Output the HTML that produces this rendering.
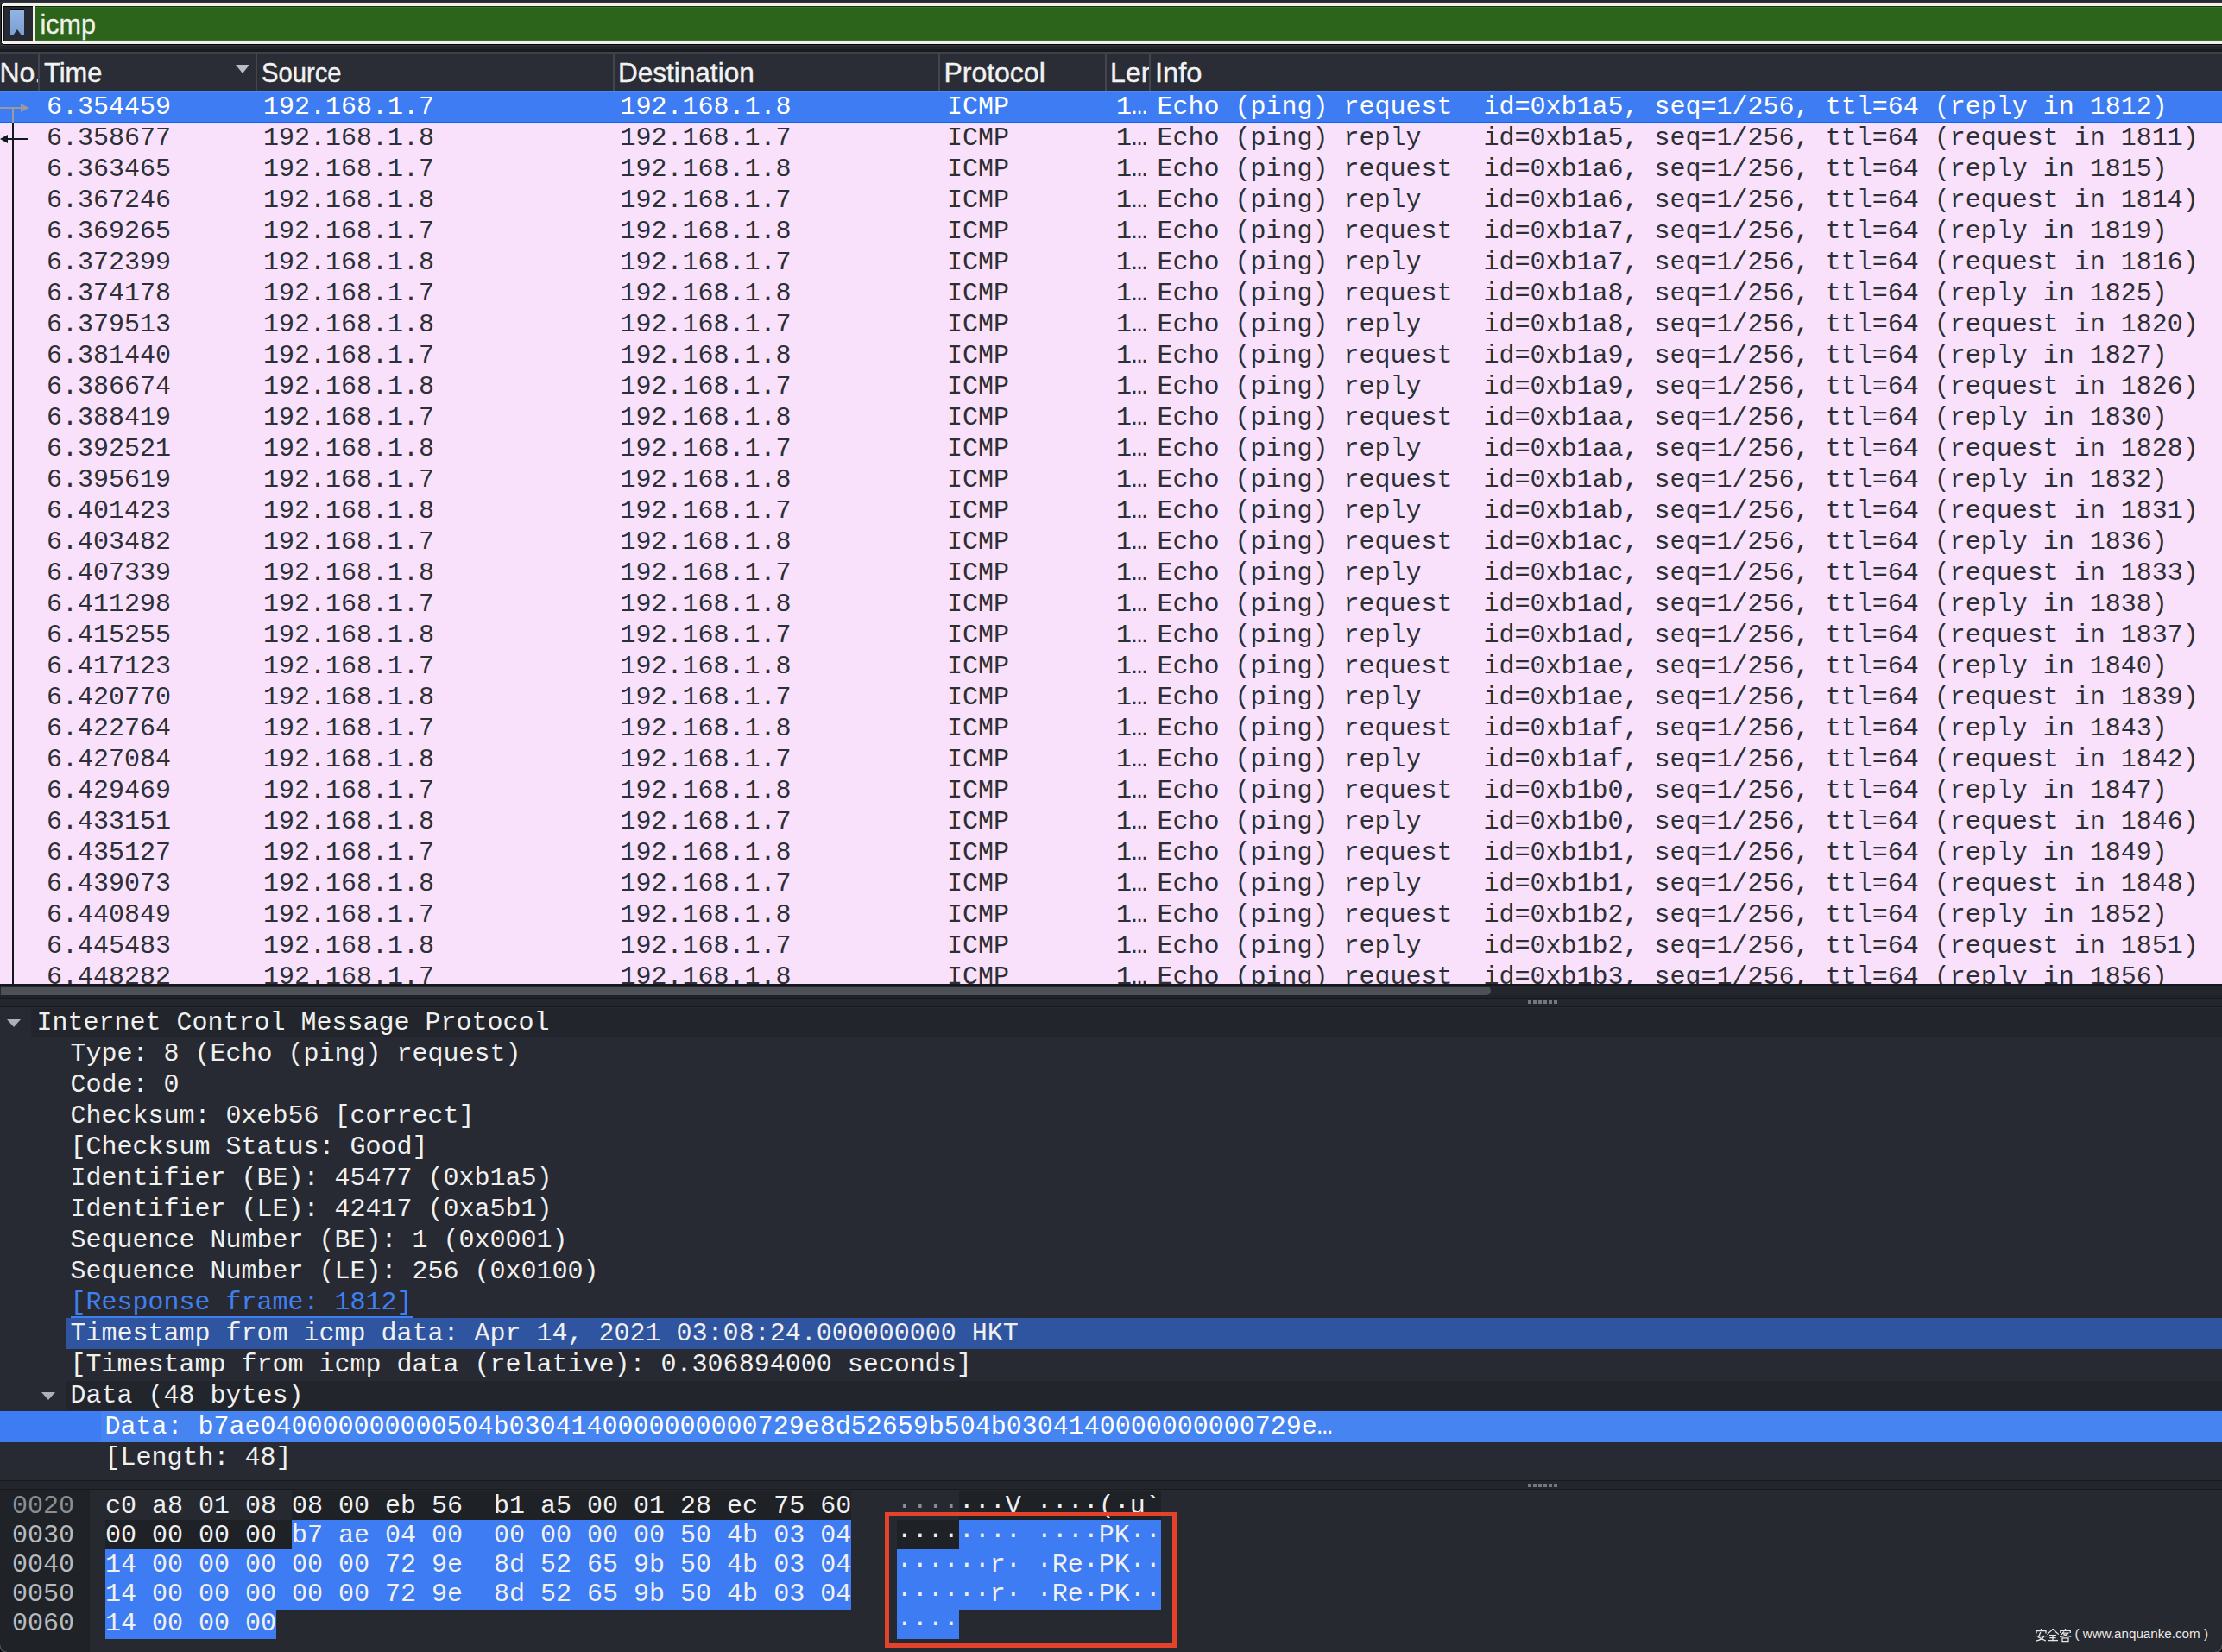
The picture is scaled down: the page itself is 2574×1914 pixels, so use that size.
<!DOCTYPE html>
<html><head><meta charset="utf-8">
<style>
html,body{margin:0;padding:0;}
body{width:2574px;height:1914px;overflow:hidden;position:relative;background:#262932;font-family:"Liberation Mono",monospace;}
.a{position:absolute;}
.m{position:absolute;font-family:"Liberation Mono",monospace;font-size:30px;line-height:36px;white-space:pre;}
.s{position:absolute;font-family:"Liberation Sans",sans-serif;font-size:32px;line-height:36px;white-space:pre;color:#f2f2f2;-webkit-text-stroke:0.4px #f2f2f2;}
</style></head><body>

<div class="a" style="left:0;top:0;width:2574px;height:2px;background:#262932"></div>
<div class="a" style="left:0;top:2px;width:2574px;height:1px;background:#33363d"></div>
<div class="a" style="left:4px;top:3px;width:2570px;height:1px;background:#000"></div>
<div class="a" style="left:4px;top:4px;width:2570px;height:3px;background:#f3f0ea"></div>
<div class="a" style="left:4px;top:48px;width:2570px;height:3px;background:#f3f0ea"></div>
<div class="a" style="left:4px;top:51px;width:2570px;height:1px;background:#000"></div>
<div class="a" style="left:2px;top:5px;width:2px;height:45px;background:#f3f0ea"></div>
<div class="a" style="left:1px;top:6px;width:1px;height:43px;background:#000"></div>
<div class="a" style="left:4px;top:7px;width:34px;height:41px;background:#262932;"></div>
<div class="a" style="left:4px;top:7px;width:34px;height:1px;background:#000"></div>
<div class="a" style="left:4px;top:47px;width:34px;height:1px;background:#000"></div>
<div class="a" style="left:4px;top:8px;width:1px;height:39px;background:#111318"></div>
<div class="a" style="left:38px;top:7px;width:2px;height:41px;background:#f3f0ea"></div>
<svg class="a" style="left:12px;top:11px" width="16" height="31" viewBox="0 0 16 31"><defs><linearGradient id="bg1" x1="0" y1="0" x2="0" y2="1"><stop offset="0" stop-color="#92b4e2"/><stop offset="1" stop-color="#7a9fd2"/></linearGradient></defs><rect x="0" y="0" width="16" height="1" fill="#000"/><path d="M0 1 H16 V30 H13 L8 23 L3 30 H0 Z" fill="url(#bg1)"/></svg>
<div class="a" style="left:40px;top:7px;width:2534px;height:41px;background:#2d641b"></div>
<div class="a" style="left:40px;top:7px;width:2534px;height:1px;background:#004400"></div>
<div class="a" style="left:40px;top:8px;width:2534px;height:1px;background:#3a7030"></div>
<div class="a" style="left:40px;top:46px;width:2534px;height:1px;background:#3a7030"></div>
<div class="a" style="left:40px;top:47px;width:2534px;height:1px;background:#004400"></div>
<div class="a" style="left:40px;top:7px;width:1px;height:41px;background:#004400"></div>
<div class="s" style="left:46.6px;top:10px;line-height:36px;font-size:30.5px;color:#eef2ea;-webkit-text-stroke:0.3px #eef2ea">icmp</div>
<div class="a" style="left:0;top:52px;width:2574px;height:1px;background:#33363d"></div>
<div class="a" style="left:0;top:53px;width:2574px;height:4px;background:#22252b"></div>
<div class="a" style="left:0;top:57px;width:2574px;height:3px;background:#1a1b1f"></div>
<div class="a" style="left:0;top:60px;width:2574px;height:45px;background:#2a2d35"></div>
<div class="a" style="left:0;top:60px;width:2574px;height:2px;background:#3f424a"></div>
<div class="a" style="left:0;top:105px;width:2574px;height:1px;background:#0c0a0a"></div>
<div class="a" style="left:44px;top:62px;width:2px;height:43px;background:#43464d"></div>
<div class="a" style="left:296px;top:62px;width:2px;height:43px;background:#43464d"></div>
<div class="a" style="left:709.5px;top:62px;width:2px;height:43px;background:#43464d"></div>
<div class="a" style="left:1087px;top:62px;width:2px;height:43px;background:#43464d"></div>
<div class="a" style="left:1279.5px;top:62px;width:2px;height:43px;background:#43464d"></div>
<div class="a" style="left:1331px;top:62px;width:2px;height:43px;background:#43464d"></div>
<div class="s" style="left:-0.62px;top:65.5px;width:44.62px;overflow:hidden"><span style="display:inline-block;transform:scaleX(1.0);transform-origin:0 0">No.</span></div>
<div class="s" style="left:51.21px;top:65.5px"><span style="display:inline-block;transform:scaleX(0.963);transform-origin:0 0">Time</span></div>
<div class="s" style="left:303.27px;top:65.5px"><span style="display:inline-block;transform:scaleX(0.913);transform-origin:0 0">Source</span></div>
<div class="s" style="left:716.21px;top:65.5px"><span style="display:inline-block;transform:scaleX(0.985);transform-origin:0 0">Destination</span></div>
<div class="s" style="left:1093.38px;top:65.5px"><span style="display:inline-block;transform:scaleX(1.0);transform-origin:0 0">Protocol</span></div>
<div class="s" style="left:1286.08px;top:65.5px;width:44.92px;overflow:hidden"><span style="display:inline-block;transform:scaleX(1.0);transform-origin:0 0">Len</span></div>
<div class="s" style="left:1337.79px;top:65.5px"><span style="display:inline-block;transform:scaleX(1.02);transform-origin:0 0">Info</span></div>
<svg class="a" style="left:273px;top:75px" width="16" height="11" viewBox="0 0 16 11"><path d="M0 0 H16 L8 10 Z" fill="#b9bcc2"/></svg>
<div class="a" style="left:0;top:106px;width:2574px;height:1034px;overflow:hidden">
<div class="a" style="left:0;top:0px;width:2574px;height:36px;background:#3d7cf3"></div>
<div class="m" style="left:54px;top:0px;color:#ffffff">6.354459</div>
<div class="m" style="left:305px;top:0px;color:#ffffff">192.168.1.7</div>
<div class="m" style="left:718.5px;top:0px;color:#ffffff">192.168.1.8</div>
<div class="m" style="left:1097px;top:0px;color:#ffffff">ICMP</div>
<div class="m" style="left:1293px;top:0px;color:#ffffff">1…</div>
<div class="m" style="left:1340.5px;top:0px;color:#ffffff">Echo (ping) request  id=0xb1a5, seq=1/256, ttl=64 (reply in 1812)</div>
<div class="a" style="left:0;top:36px;width:2574px;height:36px;background:#f9e1fb"></div>
<div class="m" style="left:54px;top:36px;color:#2c3036">6.358677</div>
<div class="m" style="left:305px;top:36px;color:#2c3036">192.168.1.8</div>
<div class="m" style="left:718.5px;top:36px;color:#2c3036">192.168.1.7</div>
<div class="m" style="left:1097px;top:36px;color:#2c3036">ICMP</div>
<div class="m" style="left:1293px;top:36px;color:#2c3036">1…</div>
<div class="m" style="left:1340.5px;top:36px;color:#2c3036">Echo (ping) reply    id=0xb1a5, seq=1/256, ttl=64 (request in 1811)</div>
<div class="a" style="left:0;top:72px;width:2574px;height:36px;background:#f9e1fb"></div>
<div class="m" style="left:54px;top:72px;color:#2c3036">6.363465</div>
<div class="m" style="left:305px;top:72px;color:#2c3036">192.168.1.7</div>
<div class="m" style="left:718.5px;top:72px;color:#2c3036">192.168.1.8</div>
<div class="m" style="left:1097px;top:72px;color:#2c3036">ICMP</div>
<div class="m" style="left:1293px;top:72px;color:#2c3036">1…</div>
<div class="m" style="left:1340.5px;top:72px;color:#2c3036">Echo (ping) request  id=0xb1a6, seq=1/256, ttl=64 (reply in 1815)</div>
<div class="a" style="left:0;top:108px;width:2574px;height:36px;background:#f9e1fb"></div>
<div class="m" style="left:54px;top:108px;color:#2c3036">6.367246</div>
<div class="m" style="left:305px;top:108px;color:#2c3036">192.168.1.8</div>
<div class="m" style="left:718.5px;top:108px;color:#2c3036">192.168.1.7</div>
<div class="m" style="left:1097px;top:108px;color:#2c3036">ICMP</div>
<div class="m" style="left:1293px;top:108px;color:#2c3036">1…</div>
<div class="m" style="left:1340.5px;top:108px;color:#2c3036">Echo (ping) reply    id=0xb1a6, seq=1/256, ttl=64 (request in 1814)</div>
<div class="a" style="left:0;top:144px;width:2574px;height:36px;background:#f9e1fb"></div>
<div class="m" style="left:54px;top:144px;color:#2c3036">6.369265</div>
<div class="m" style="left:305px;top:144px;color:#2c3036">192.168.1.7</div>
<div class="m" style="left:718.5px;top:144px;color:#2c3036">192.168.1.8</div>
<div class="m" style="left:1097px;top:144px;color:#2c3036">ICMP</div>
<div class="m" style="left:1293px;top:144px;color:#2c3036">1…</div>
<div class="m" style="left:1340.5px;top:144px;color:#2c3036">Echo (ping) request  id=0xb1a7, seq=1/256, ttl=64 (reply in 1819)</div>
<div class="a" style="left:0;top:180px;width:2574px;height:36px;background:#f9e1fb"></div>
<div class="m" style="left:54px;top:180px;color:#2c3036">6.372399</div>
<div class="m" style="left:305px;top:180px;color:#2c3036">192.168.1.8</div>
<div class="m" style="left:718.5px;top:180px;color:#2c3036">192.168.1.7</div>
<div class="m" style="left:1097px;top:180px;color:#2c3036">ICMP</div>
<div class="m" style="left:1293px;top:180px;color:#2c3036">1…</div>
<div class="m" style="left:1340.5px;top:180px;color:#2c3036">Echo (ping) reply    id=0xb1a7, seq=1/256, ttl=64 (request in 1816)</div>
<div class="a" style="left:0;top:216px;width:2574px;height:36px;background:#f9e1fb"></div>
<div class="m" style="left:54px;top:216px;color:#2c3036">6.374178</div>
<div class="m" style="left:305px;top:216px;color:#2c3036">192.168.1.7</div>
<div class="m" style="left:718.5px;top:216px;color:#2c3036">192.168.1.8</div>
<div class="m" style="left:1097px;top:216px;color:#2c3036">ICMP</div>
<div class="m" style="left:1293px;top:216px;color:#2c3036">1…</div>
<div class="m" style="left:1340.5px;top:216px;color:#2c3036">Echo (ping) request  id=0xb1a8, seq=1/256, ttl=64 (reply in 1825)</div>
<div class="a" style="left:0;top:252px;width:2574px;height:36px;background:#f9e1fb"></div>
<div class="m" style="left:54px;top:252px;color:#2c3036">6.379513</div>
<div class="m" style="left:305px;top:252px;color:#2c3036">192.168.1.8</div>
<div class="m" style="left:718.5px;top:252px;color:#2c3036">192.168.1.7</div>
<div class="m" style="left:1097px;top:252px;color:#2c3036">ICMP</div>
<div class="m" style="left:1293px;top:252px;color:#2c3036">1…</div>
<div class="m" style="left:1340.5px;top:252px;color:#2c3036">Echo (ping) reply    id=0xb1a8, seq=1/256, ttl=64 (request in 1820)</div>
<div class="a" style="left:0;top:288px;width:2574px;height:36px;background:#f9e1fb"></div>
<div class="m" style="left:54px;top:288px;color:#2c3036">6.381440</div>
<div class="m" style="left:305px;top:288px;color:#2c3036">192.168.1.7</div>
<div class="m" style="left:718.5px;top:288px;color:#2c3036">192.168.1.8</div>
<div class="m" style="left:1097px;top:288px;color:#2c3036">ICMP</div>
<div class="m" style="left:1293px;top:288px;color:#2c3036">1…</div>
<div class="m" style="left:1340.5px;top:288px;color:#2c3036">Echo (ping) request  id=0xb1a9, seq=1/256, ttl=64 (reply in 1827)</div>
<div class="a" style="left:0;top:324px;width:2574px;height:36px;background:#f9e1fb"></div>
<div class="m" style="left:54px;top:324px;color:#2c3036">6.386674</div>
<div class="m" style="left:305px;top:324px;color:#2c3036">192.168.1.8</div>
<div class="m" style="left:718.5px;top:324px;color:#2c3036">192.168.1.7</div>
<div class="m" style="left:1097px;top:324px;color:#2c3036">ICMP</div>
<div class="m" style="left:1293px;top:324px;color:#2c3036">1…</div>
<div class="m" style="left:1340.5px;top:324px;color:#2c3036">Echo (ping) reply    id=0xb1a9, seq=1/256, ttl=64 (request in 1826)</div>
<div class="a" style="left:0;top:360px;width:2574px;height:36px;background:#f9e1fb"></div>
<div class="m" style="left:54px;top:360px;color:#2c3036">6.388419</div>
<div class="m" style="left:305px;top:360px;color:#2c3036">192.168.1.7</div>
<div class="m" style="left:718.5px;top:360px;color:#2c3036">192.168.1.8</div>
<div class="m" style="left:1097px;top:360px;color:#2c3036">ICMP</div>
<div class="m" style="left:1293px;top:360px;color:#2c3036">1…</div>
<div class="m" style="left:1340.5px;top:360px;color:#2c3036">Echo (ping) request  id=0xb1aa, seq=1/256, ttl=64 (reply in 1830)</div>
<div class="a" style="left:0;top:396px;width:2574px;height:36px;background:#f9e1fb"></div>
<div class="m" style="left:54px;top:396px;color:#2c3036">6.392521</div>
<div class="m" style="left:305px;top:396px;color:#2c3036">192.168.1.8</div>
<div class="m" style="left:718.5px;top:396px;color:#2c3036">192.168.1.7</div>
<div class="m" style="left:1097px;top:396px;color:#2c3036">ICMP</div>
<div class="m" style="left:1293px;top:396px;color:#2c3036">1…</div>
<div class="m" style="left:1340.5px;top:396px;color:#2c3036">Echo (ping) reply    id=0xb1aa, seq=1/256, ttl=64 (request in 1828)</div>
<div class="a" style="left:0;top:432px;width:2574px;height:36px;background:#f9e1fb"></div>
<div class="m" style="left:54px;top:432px;color:#2c3036">6.395619</div>
<div class="m" style="left:305px;top:432px;color:#2c3036">192.168.1.7</div>
<div class="m" style="left:718.5px;top:432px;color:#2c3036">192.168.1.8</div>
<div class="m" style="left:1097px;top:432px;color:#2c3036">ICMP</div>
<div class="m" style="left:1293px;top:432px;color:#2c3036">1…</div>
<div class="m" style="left:1340.5px;top:432px;color:#2c3036">Echo (ping) request  id=0xb1ab, seq=1/256, ttl=64 (reply in 1832)</div>
<div class="a" style="left:0;top:468px;width:2574px;height:36px;background:#f9e1fb"></div>
<div class="m" style="left:54px;top:468px;color:#2c3036">6.401423</div>
<div class="m" style="left:305px;top:468px;color:#2c3036">192.168.1.8</div>
<div class="m" style="left:718.5px;top:468px;color:#2c3036">192.168.1.7</div>
<div class="m" style="left:1097px;top:468px;color:#2c3036">ICMP</div>
<div class="m" style="left:1293px;top:468px;color:#2c3036">1…</div>
<div class="m" style="left:1340.5px;top:468px;color:#2c3036">Echo (ping) reply    id=0xb1ab, seq=1/256, ttl=64 (request in 1831)</div>
<div class="a" style="left:0;top:504px;width:2574px;height:36px;background:#f9e1fb"></div>
<div class="m" style="left:54px;top:504px;color:#2c3036">6.403482</div>
<div class="m" style="left:305px;top:504px;color:#2c3036">192.168.1.7</div>
<div class="m" style="left:718.5px;top:504px;color:#2c3036">192.168.1.8</div>
<div class="m" style="left:1097px;top:504px;color:#2c3036">ICMP</div>
<div class="m" style="left:1293px;top:504px;color:#2c3036">1…</div>
<div class="m" style="left:1340.5px;top:504px;color:#2c3036">Echo (ping) request  id=0xb1ac, seq=1/256, ttl=64 (reply in 1836)</div>
<div class="a" style="left:0;top:540px;width:2574px;height:36px;background:#f9e1fb"></div>
<div class="m" style="left:54px;top:540px;color:#2c3036">6.407339</div>
<div class="m" style="left:305px;top:540px;color:#2c3036">192.168.1.8</div>
<div class="m" style="left:718.5px;top:540px;color:#2c3036">192.168.1.7</div>
<div class="m" style="left:1097px;top:540px;color:#2c3036">ICMP</div>
<div class="m" style="left:1293px;top:540px;color:#2c3036">1…</div>
<div class="m" style="left:1340.5px;top:540px;color:#2c3036">Echo (ping) reply    id=0xb1ac, seq=1/256, ttl=64 (request in 1833)</div>
<div class="a" style="left:0;top:576px;width:2574px;height:36px;background:#f9e1fb"></div>
<div class="m" style="left:54px;top:576px;color:#2c3036">6.411298</div>
<div class="m" style="left:305px;top:576px;color:#2c3036">192.168.1.7</div>
<div class="m" style="left:718.5px;top:576px;color:#2c3036">192.168.1.8</div>
<div class="m" style="left:1097px;top:576px;color:#2c3036">ICMP</div>
<div class="m" style="left:1293px;top:576px;color:#2c3036">1…</div>
<div class="m" style="left:1340.5px;top:576px;color:#2c3036">Echo (ping) request  id=0xb1ad, seq=1/256, ttl=64 (reply in 1838)</div>
<div class="a" style="left:0;top:612px;width:2574px;height:36px;background:#f9e1fb"></div>
<div class="m" style="left:54px;top:612px;color:#2c3036">6.415255</div>
<div class="m" style="left:305px;top:612px;color:#2c3036">192.168.1.8</div>
<div class="m" style="left:718.5px;top:612px;color:#2c3036">192.168.1.7</div>
<div class="m" style="left:1097px;top:612px;color:#2c3036">ICMP</div>
<div class="m" style="left:1293px;top:612px;color:#2c3036">1…</div>
<div class="m" style="left:1340.5px;top:612px;color:#2c3036">Echo (ping) reply    id=0xb1ad, seq=1/256, ttl=64 (request in 1837)</div>
<div class="a" style="left:0;top:648px;width:2574px;height:36px;background:#f9e1fb"></div>
<div class="m" style="left:54px;top:648px;color:#2c3036">6.417123</div>
<div class="m" style="left:305px;top:648px;color:#2c3036">192.168.1.7</div>
<div class="m" style="left:718.5px;top:648px;color:#2c3036">192.168.1.8</div>
<div class="m" style="left:1097px;top:648px;color:#2c3036">ICMP</div>
<div class="m" style="left:1293px;top:648px;color:#2c3036">1…</div>
<div class="m" style="left:1340.5px;top:648px;color:#2c3036">Echo (ping) request  id=0xb1ae, seq=1/256, ttl=64 (reply in 1840)</div>
<div class="a" style="left:0;top:684px;width:2574px;height:36px;background:#f9e1fb"></div>
<div class="m" style="left:54px;top:684px;color:#2c3036">6.420770</div>
<div class="m" style="left:305px;top:684px;color:#2c3036">192.168.1.8</div>
<div class="m" style="left:718.5px;top:684px;color:#2c3036">192.168.1.7</div>
<div class="m" style="left:1097px;top:684px;color:#2c3036">ICMP</div>
<div class="m" style="left:1293px;top:684px;color:#2c3036">1…</div>
<div class="m" style="left:1340.5px;top:684px;color:#2c3036">Echo (ping) reply    id=0xb1ae, seq=1/256, ttl=64 (request in 1839)</div>
<div class="a" style="left:0;top:720px;width:2574px;height:36px;background:#f9e1fb"></div>
<div class="m" style="left:54px;top:720px;color:#2c3036">6.422764</div>
<div class="m" style="left:305px;top:720px;color:#2c3036">192.168.1.7</div>
<div class="m" style="left:718.5px;top:720px;color:#2c3036">192.168.1.8</div>
<div class="m" style="left:1097px;top:720px;color:#2c3036">ICMP</div>
<div class="m" style="left:1293px;top:720px;color:#2c3036">1…</div>
<div class="m" style="left:1340.5px;top:720px;color:#2c3036">Echo (ping) request  id=0xb1af, seq=1/256, ttl=64 (reply in 1843)</div>
<div class="a" style="left:0;top:756px;width:2574px;height:36px;background:#f9e1fb"></div>
<div class="m" style="left:54px;top:756px;color:#2c3036">6.427084</div>
<div class="m" style="left:305px;top:756px;color:#2c3036">192.168.1.8</div>
<div class="m" style="left:718.5px;top:756px;color:#2c3036">192.168.1.7</div>
<div class="m" style="left:1097px;top:756px;color:#2c3036">ICMP</div>
<div class="m" style="left:1293px;top:756px;color:#2c3036">1…</div>
<div class="m" style="left:1340.5px;top:756px;color:#2c3036">Echo (ping) reply    id=0xb1af, seq=1/256, ttl=64 (request in 1842)</div>
<div class="a" style="left:0;top:792px;width:2574px;height:36px;background:#f9e1fb"></div>
<div class="m" style="left:54px;top:792px;color:#2c3036">6.429469</div>
<div class="m" style="left:305px;top:792px;color:#2c3036">192.168.1.7</div>
<div class="m" style="left:718.5px;top:792px;color:#2c3036">192.168.1.8</div>
<div class="m" style="left:1097px;top:792px;color:#2c3036">ICMP</div>
<div class="m" style="left:1293px;top:792px;color:#2c3036">1…</div>
<div class="m" style="left:1340.5px;top:792px;color:#2c3036">Echo (ping) request  id=0xb1b0, seq=1/256, ttl=64 (reply in 1847)</div>
<div class="a" style="left:0;top:828px;width:2574px;height:36px;background:#f9e1fb"></div>
<div class="m" style="left:54px;top:828px;color:#2c3036">6.433151</div>
<div class="m" style="left:305px;top:828px;color:#2c3036">192.168.1.8</div>
<div class="m" style="left:718.5px;top:828px;color:#2c3036">192.168.1.7</div>
<div class="m" style="left:1097px;top:828px;color:#2c3036">ICMP</div>
<div class="m" style="left:1293px;top:828px;color:#2c3036">1…</div>
<div class="m" style="left:1340.5px;top:828px;color:#2c3036">Echo (ping) reply    id=0xb1b0, seq=1/256, ttl=64 (request in 1846)</div>
<div class="a" style="left:0;top:864px;width:2574px;height:36px;background:#f9e1fb"></div>
<div class="m" style="left:54px;top:864px;color:#2c3036">6.435127</div>
<div class="m" style="left:305px;top:864px;color:#2c3036">192.168.1.7</div>
<div class="m" style="left:718.5px;top:864px;color:#2c3036">192.168.1.8</div>
<div class="m" style="left:1097px;top:864px;color:#2c3036">ICMP</div>
<div class="m" style="left:1293px;top:864px;color:#2c3036">1…</div>
<div class="m" style="left:1340.5px;top:864px;color:#2c3036">Echo (ping) request  id=0xb1b1, seq=1/256, ttl=64 (reply in 1849)</div>
<div class="a" style="left:0;top:900px;width:2574px;height:36px;background:#f9e1fb"></div>
<div class="m" style="left:54px;top:900px;color:#2c3036">6.439073</div>
<div class="m" style="left:305px;top:900px;color:#2c3036">192.168.1.8</div>
<div class="m" style="left:718.5px;top:900px;color:#2c3036">192.168.1.7</div>
<div class="m" style="left:1097px;top:900px;color:#2c3036">ICMP</div>
<div class="m" style="left:1293px;top:900px;color:#2c3036">1…</div>
<div class="m" style="left:1340.5px;top:900px;color:#2c3036">Echo (ping) reply    id=0xb1b1, seq=1/256, ttl=64 (request in 1848)</div>
<div class="a" style="left:0;top:936px;width:2574px;height:36px;background:#f9e1fb"></div>
<div class="m" style="left:54px;top:936px;color:#2c3036">6.440849</div>
<div class="m" style="left:305px;top:936px;color:#2c3036">192.168.1.7</div>
<div class="m" style="left:718.5px;top:936px;color:#2c3036">192.168.1.8</div>
<div class="m" style="left:1097px;top:936px;color:#2c3036">ICMP</div>
<div class="m" style="left:1293px;top:936px;color:#2c3036">1…</div>
<div class="m" style="left:1340.5px;top:936px;color:#2c3036">Echo (ping) request  id=0xb1b2, seq=1/256, ttl=64 (reply in 1852)</div>
<div class="a" style="left:0;top:972px;width:2574px;height:36px;background:#f9e1fb"></div>
<div class="m" style="left:54px;top:972px;color:#2c3036">6.445483</div>
<div class="m" style="left:305px;top:972px;color:#2c3036">192.168.1.8</div>
<div class="m" style="left:718.5px;top:972px;color:#2c3036">192.168.1.7</div>
<div class="m" style="left:1097px;top:972px;color:#2c3036">ICMP</div>
<div class="m" style="left:1293px;top:972px;color:#2c3036">1…</div>
<div class="m" style="left:1340.5px;top:972px;color:#2c3036">Echo (ping) reply    id=0xb1b2, seq=1/256, ttl=64 (request in 1851)</div>
<div class="a" style="left:0;top:1008px;width:2574px;height:36px;background:#f9e1fb"></div>
<div class="m" style="left:54px;top:1008px;color:#2c3036">6.448282</div>
<div class="m" style="left:305px;top:1008px;color:#2c3036">192.168.1.7</div>
<div class="m" style="left:718.5px;top:1008px;color:#2c3036">192.168.1.8</div>
<div class="m" style="left:1097px;top:1008px;color:#2c3036">ICMP</div>
<div class="m" style="left:1293px;top:1008px;color:#2c3036">1…</div>
<div class="m" style="left:1340.5px;top:1008px;color:#2c3036">Echo (ping) request  id=0xb1b3, seq=1/256, ttl=64 (reply in 1856)</div>
<div class="a" style="left:0;top:0;width:2574px;height:1px;background:#4a8bff"></div>
<div class="a" style="left:0;top:35px;width:2574px;height:1px;background:#0a62f2"></div>
<div class="a" style="left:0;top:18px;width:25px;height:2px;background:#9a9a9a"></div>
<svg class="a" style="left:24px;top:14px" width="10" height="10" viewBox="0 0 10 10"><path d="M0 0 L10 5 L0 10 Z" fill="#9a9a9a"/></svg>
<div class="a" style="left:14px;top:19px;width:2px;height:17px;background:#9a9a9a"></div>
<div class="a" style="left:14px;top:36px;width:2px;height:1000px;background:#0f1a1c"></div>
<div class="a" style="left:7px;top:54px;width:25px;height:2px;background:#0f1a1c"></div>
<svg class="a" style="left:0px;top:50px" width="9" height="10" viewBox="0 0 9 10"><path d="M9 0 L0 5 L9 10 Z" fill="#0f1a1c"/></svg>
</div>
<div class="a" style="left:0;top:1140px;width:2574px;height:2px;background:#15171b"></div>
<div class="a" style="left:0;top:1142px;width:2574px;height:11px;background:#23262c"></div>
<div class="a" style="left:1px;top:1143px;width:1726px;height:10px;background:#4d5056;border-radius:0 5px 5px 0"></div>
<div class="a" style="left:0;top:1153px;width:2574px;height:4px;background:#1f2227"></div>
<div class="a" style="left:0;top:1156px;width:2574px;height:1px;background:#17191d"></div>
<div class="a" style="left:0;top:1157px;width:2574px;height:9px;background:#23262c"></div>
<div class="a" style="left:0;top:1166px;width:2574px;height:1px;background:#17191d"></div>
<div class="a" style="left:1770px;top:1159px;width:4px;height:4px;background:#74777d"></div>
<div class="a" style="left:1776px;top:1159px;width:4px;height:4px;background:#74777d"></div>
<div class="a" style="left:1782px;top:1159px;width:4px;height:4px;background:#74777d"></div>
<div class="a" style="left:1788px;top:1159px;width:4px;height:4px;background:#74777d"></div>
<div class="a" style="left:1794px;top:1159px;width:4px;height:4px;background:#74777d"></div>
<div class="a" style="left:1800px;top:1159px;width:4px;height:4px;background:#74777d"></div>
<div class="a" style="left:0;top:1167px;width:2574px;height:548px;background:#272a32"></div>
<div class="a" style="left:36px;top:1168px;width:2538px;height:34px;background:#22252c"></div>
<div class="m" style="left:42.5px;top:1167px;color:#f0f0f0">Internet Control Message Protocol</div>
<div class="m" style="left:81.5px;top:1203px;color:#f0f0f0">Type: 8 (Echo (ping) request)</div>
<div class="m" style="left:81.5px;top:1239px;color:#f0f0f0">Code: 0</div>
<div class="m" style="left:81.5px;top:1275px;color:#f0f0f0">Checksum: 0xeb56 [correct]</div>
<div class="m" style="left:81.5px;top:1311px;color:#f0f0f0">[Checksum Status: Good]</div>
<div class="m" style="left:81.5px;top:1347px;color:#f0f0f0">Identifier (BE): 45477 (0xb1a5)</div>
<div class="m" style="left:81.5px;top:1383px;color:#f0f0f0">Identifier (LE): 42417 (0xa5b1)</div>
<div class="m" style="left:81.5px;top:1419px;color:#f0f0f0">Sequence Number (BE): 1 (0x0001)</div>
<div class="m" style="left:81.5px;top:1455px;color:#f0f0f0">Sequence Number (LE): 256 (0x0100)</div>
<div class="m" style="left:81.5px;top:1491px;color:#3f80f0">[Response frame: 1812]</div>
<div class="a" style="left:82px;top:1525px;width:396px;height:2px;background:#3f80f0"></div>
<div class="a" style="left:76px;top:1527px;width:2498px;height:36px;background:#2f54a0"></div>
<div class="m" style="left:81.5px;top:1527px;color:#f0f0f0">Timestamp from icmp data: Apr 14, 2021 03:08:24.000000000 HKT</div>
<div class="m" style="left:81.5px;top:1563px;color:#f0f0f0">[Timestamp from icmp data (relative): 0.306894000 seconds]</div>
<div class="a" style="left:76px;top:1600px;width:2498px;height:34px;background:#22252c"></div>
<div class="m" style="left:81.5px;top:1599px;color:#f0f0f0">Data (48 bytes)</div>
<div class="a" style="left:0;top:1635px;width:2574px;height:36px;background:#3d7cf3"></div>
<div class="a" style="left:117px;top:1635px;width:2457px;height:36px;background:#4684f2"></div>
<div class="m" style="left:121.5px;top:1635px;color:#ffffff">Data: b7ae040000000000504b0304140000000000729e8d52659b504b0304140000000000729e…</div>
<div class="m" style="left:121.5px;top:1671px;color:#f0f0f0">[Length: 48]</div>
<svg class="a" style="left:8px;top:1181px" width="16" height="10" viewBox="0 0 16 10"><path d="M0 0 H16 L8 9 Z" fill="#aeb0b4"/></svg>
<svg class="a" style="left:48px;top:1613px" width="16" height="10" viewBox="0 0 16 10"><path d="M0 0 H16 L8 9 Z" fill="#aeb0b4"/></svg>
<div class="a" style="left:0;top:1715px;width:2574px;height:11px;background:#23262c"></div>
<div class="a" style="left:0;top:1715px;width:2574px;height:1px;background:#17191d"></div>
<div class="a" style="left:0;top:1725px;width:2574px;height:1px;background:#17191d"></div>
<div class="a" style="left:1770px;top:1719px;width:4px;height:4px;background:#74777d"></div>
<div class="a" style="left:1776px;top:1719px;width:4px;height:4px;background:#74777d"></div>
<div class="a" style="left:1782px;top:1719px;width:4px;height:4px;background:#74777d"></div>
<div class="a" style="left:1788px;top:1719px;width:4px;height:4px;background:#74777d"></div>
<div class="a" style="left:1794px;top:1719px;width:4px;height:4px;background:#74777d"></div>
<div class="a" style="left:1800px;top:1719px;width:4px;height:4px;background:#74777d"></div>
<div class="a" style="left:0;top:1726px;width:2574px;height:188px;background:#262930"></div>
<div class="a" style="left:0;top:1726px;width:104px;height:188px;background:#1f2227"></div>
<div class="a" style="left:338px;top:1727px;width:648px;height:36px;background:#1e2126"></div>
<div class="a" style="left:122px;top:1761px;width:216px;height:36px;background:#1e2126"></div>
<div class="a" style="left:338px;top:1761px;width:648px;height:36px;background:#3d7cf3"></div>
<div class="a" style="left:122px;top:1795px;width:864px;height:36px;background:#3d7cf3"></div>
<div class="a" style="left:122px;top:1829px;width:864px;height:36px;background:#3d7cf3"></div>
<div class="a" style="left:122px;top:1863px;width:198px;height:36px;background:#3d7cf3"></div>
<div class="a" style="left:1110.7px;top:1727px;width:234.0px;height:36px;background:#1e2126"></div>
<div class="a" style="left:1038.7px;top:1761px;width:72.0px;height:36px;background:#1e2126"></div>
<div class="a" style="left:1110.7px;top:1761px;width:234.0px;height:36px;background:#3d7cf3"></div>
<div class="a" style="left:1038.7px;top:1795px;width:306.0px;height:36px;background:#3d7cf3"></div>
<div class="a" style="left:1038.7px;top:1829px;width:306.0px;height:36px;background:#3d7cf3"></div>
<div class="a" style="left:1038.7px;top:1863px;width:72.0px;height:36px;background:#3d7cf3"></div>
<div class="m" style="left:14px;top:1727px;color:#8b8e94">0020</div>
<div class="m" style="left:122px;top:1727px;color:#f0f0f0">c0 a8 01 08 08 00 eb 56  b1 a5 00 01 28 ec 75 60</div>
<div class="m" style="left:14px;top:1761px;color:#b8babe">0030</div>
<div class="m" style="left:122px;top:1761px;color:#f0f0f0">00 00 00 00 b7 ae 04 00  00 00 00 00 50 4b 03 04</div>
<div class="m" style="left:14px;top:1795px;color:#b8babe">0040</div>
<div class="m" style="left:122px;top:1795px;color:#f0f0f0">14 00 00 00 00 00 72 9e  8d 52 65 9b 50 4b 03 04</div>
<div class="m" style="left:14px;top:1829px;color:#b8babe">0050</div>
<div class="m" style="left:122px;top:1829px;color:#f0f0f0">14 00 00 00 00 00 72 9e  8d 52 65 9b 50 4b 03 04</div>
<div class="m" style="left:14px;top:1863px;color:#b8babe">0060</div>
<div class="m" style="left:122px;top:1863px;color:#f0f0f0">14 00 00 00</div>
<div class="m" style="left:1038.7px;top:1727px;color:#f0f0f0"><span style="color:#8b8e94">····</span>···V ····(·u`</div>
<div class="m" style="left:1038.7px;top:1761px;color:#f0f0f0">········ ····PK··</div>
<div class="m" style="left:1038.7px;top:1795px;color:#f0f0f0">······r· ·Re·PK··</div>
<div class="m" style="left:1038.7px;top:1829px;color:#f0f0f0">······r· ·Re·PK··</div>
<div class="m" style="left:1038.7px;top:1863px;color:#f0f0f0">····</div>
<div class="a" style="left:1025px;top:1752px;width:328px;height:147px;border:5px solid #e4422a"></div>
<svg class="a" style="left:2358px;top:1887px" width="42" height="16" viewBox="0 0 42 16"><g fill="none" stroke="#e6e6e6" stroke-width="1.3" stroke-linecap="square"><path d="M6.5 0.6 L7 2"/><path d="M1 4.8 V2.6 H12 V4.8"/><path d="M0.3 8.6 H12.7"/><path d="M5.6 4.6 Q4.4 7.6 3.4 9.8 Q7.5 11.6 11.2 13.8"/><path d="M9.6 8.8 Q8.4 12.6 0.8 14.2"/><path d="M20 0.6 L14 6.2"/><path d="M20 0.6 L26.3 6.2"/><path d="M16.6 7.6 H23.4"/><path d="M17 10.6 H23"/><path d="M14.6 13.6 H25.4"/><path d="M20 7.6 V13.6"/><path d="M34.5 0.4 L35 1.8"/><path d="M28.8 4.4 V2.4 H40.2 V4.4"/><path d="M32.6 3.8 L30.4 6.4"/><path d="M31.6 5.2 H37.6 Q35 8.2 28.8 9.4"/><path d="M33 6.6 Q36.6 8.8 40.6 9.2"/><path d="M31 10.8 V14.6 H38 V10.8 Z"/></g></svg>
<div class="a" style="left:2403.5px;top:1883px;font-family:'Liberation Sans',sans-serif;font-size:15.2px;line-height:20px;color:#e6e6e6;white-space:pre">( www.anquanke.com )</div>
<svg class="a" style="left:0;top:1906px" width="8" height="8" viewBox="0 0 8 8"><path d="M0 0 Q0 8 8 8 H0 Z" fill="#000"/><path d="M0 0 Q0 8 8 8" fill="none" stroke="#55585e" stroke-width="1.2"/></svg>
<svg class="a" style="left:2566px;top:1906px" width="8" height="8" viewBox="0 0 8 8"><path d="M8 0 Q8 8 0 8 H8 Z" fill="#000"/><path d="M8 0 Q8 8 0 8" fill="none" stroke="#55585e" stroke-width="1.2"/></svg>
</body></html>
